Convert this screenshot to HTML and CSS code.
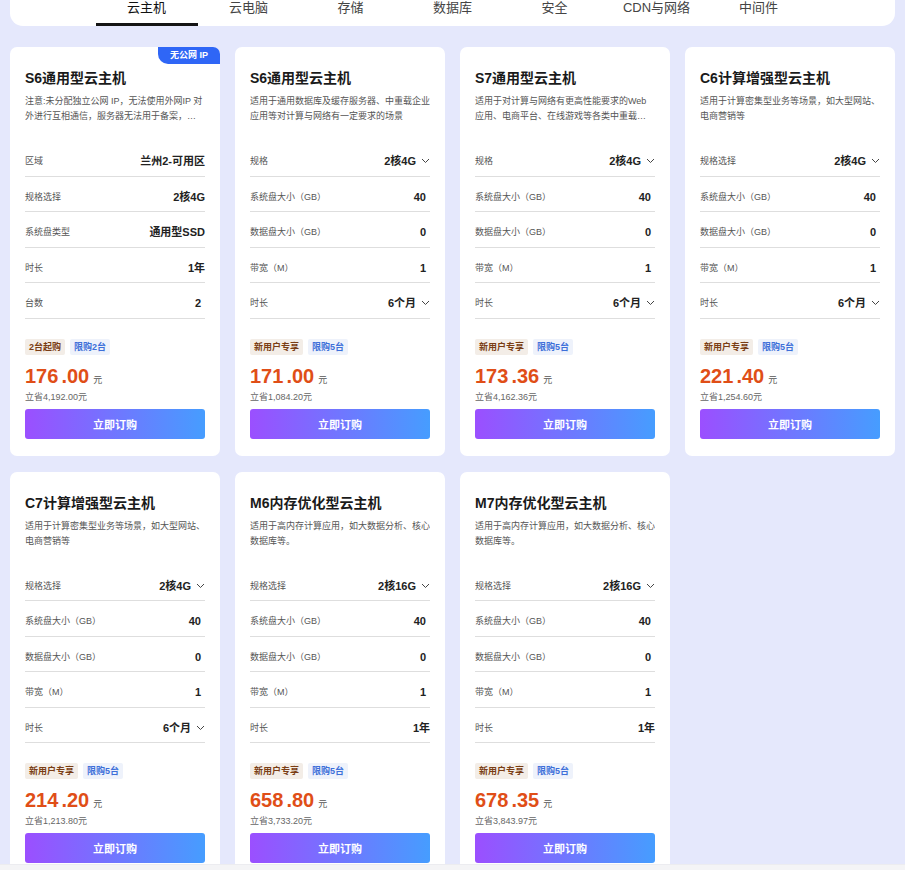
FILE: index.html
```html
<!DOCTYPE html>
<html lang="zh-CN">
<head>
  <meta charset="UTF-8" />
  <meta name="viewport" content="width=device-width, initial-scale=1.0" />
  <title>云主机</title>
  <link rel="stylesheet" href="styles.css">
</head>
<body>
  <div class="nav">
    <a class="tab active">云主机</a>
    <a class="tab">云电脑</a>
    <a class="tab">存储</a>
    <a class="tab">数据库</a>
    <a class="tab">安全</a>
    <a class="tab">CDN与网络</a>
    <a class="tab">中间件</a>
  </div>

  <div class="grid">
    <!-- S6 no public ip -->
    <div class="card">
      <span class="badge">无公网 IP</span>
      <h3>S6通用型云主机</h3>
      <p class="desc">注意:未分配独立公网 IP，无法使用外网IP 对外进行互相通信，服务器无法用于备案，请谨慎选择购买</p>
      <div class="rows">
        <div class="row"><span class="label">区域</span><span class="value">兰州2-可用区</span></div>
        <div class="row"><span class="label">规格选择</span><span class="value">2核4G</span></div>
        <div class="row"><span class="label">系统盘类型</span><span class="value">通用型SSD</span></div>
        <div class="row"><span class="label">时长</span><span class="value">1年</span></div>
        <div class="row"><span class="label">台数</span><span class="value num">2</span></div>
      </div>
      <div class="tags"><span class="tag brown">2台起购</span><span class="tag blue">限购2台</span></div>
      <div class="price"><span class="int">176</span><span class="dec">.00</span><span class="unit">元</span></div>
      <div class="save">立省4,192.00元</div>
      <button class="buy">立即订购</button>
    </div>

    <div class="card">
      <h3>S6通用型云主机</h3>
      <p class="desc">适用于通用数据库及缓存服务器、中重载企业应用等对计算与网络有一定要求的场景</p>
      <div class="rows">
        <div class="row"><span class="label">规格</span><span class="value select">2核4G<svg viewBox="0 0 9 6"><path d="M1 1l3.5 3.5L8 1"/></svg></span></div>
        <div class="row"><span class="label">系统盘大小（GB）</span><span class="value num">40</span></div>
        <div class="row"><span class="label">数据盘大小（GB）</span><span class="value num">0</span></div>
        <div class="row"><span class="label">带宽（M）</span><span class="value num">1</span></div>
        <div class="row"><span class="label">时长</span><span class="value select">6个月<svg viewBox="0 0 9 6"><path d="M1 1l3.5 3.5L8 1"/></svg></span></div>
      </div>
      <div class="tags"><span class="tag brown">新用户专享</span><span class="tag blue">限购5台</span></div>
      <div class="price"><span class="int">171</span><span class="dec">.00</span><span class="unit">元</span></div>
      <div class="save">立省1,084.20元</div>
      <button class="buy">立即订购</button>
    </div>

    <div class="card">
      <h3>S7通用型云主机</h3>
      <p class="desc">适用于对计算与网络有更高性能要求的Web应用、电商平台、在线游戏等各类中重载企业应用</p>
      <div class="rows">
        <div class="row"><span class="label">规格</span><span class="value select">2核4G<svg viewBox="0 0 9 6"><path d="M1 1l3.5 3.5L8 1"/></svg></span></div>
        <div class="row"><span class="label">系统盘大小（GB）</span><span class="value num">40</span></div>
        <div class="row"><span class="label">数据盘大小（GB）</span><span class="value num">0</span></div>
        <div class="row"><span class="label">带宽（M）</span><span class="value num">1</span></div>
        <div class="row"><span class="label">时长</span><span class="value select">6个月<svg viewBox="0 0 9 6"><path d="M1 1l3.5 3.5L8 1"/></svg></span></div>
      </div>
      <div class="tags"><span class="tag brown">新用户专享</span><span class="tag blue">限购5台</span></div>
      <div class="price"><span class="int">173</span><span class="dec">.36</span><span class="unit">元</span></div>
      <div class="save">立省4,162.36元</div>
      <button class="buy">立即订购</button>
    </div>

    <div class="card">
      <h3>C6计算增强型云主机</h3>
      <p class="desc">适用于计算密集型业务等场景，如大型网站、电商营销等</p>
      <div class="rows">
        <div class="row"><span class="label">规格选择</span><span class="value select">2核4G<svg viewBox="0 0 9 6"><path d="M1 1l3.5 3.5L8 1"/></svg></span></div>
        <div class="row"><span class="label">系统盘大小（GB）</span><span class="value num">40</span></div>
        <div class="row"><span class="label">数据盘大小（GB）</span><span class="value num">0</span></div>
        <div class="row"><span class="label">带宽（M）</span><span class="value num">1</span></div>
        <div class="row"><span class="label">时长</span><span class="value select">6个月<svg viewBox="0 0 9 6"><path d="M1 1l3.5 3.5L8 1"/></svg></span></div>
      </div>
      <div class="tags"><span class="tag brown">新用户专享</span><span class="tag blue">限购5台</span></div>
      <div class="price"><span class="int">221</span><span class="dec">.40</span><span class="unit">元</span></div>
      <div class="save">立省1,254.60元</div>
      <button class="buy">立即订购</button>
    </div>

    <div class="card">
      <h3>C7计算增强型云主机</h3>
      <p class="desc">适用于计算密集型业务等场景，如大型网站、电商营销等</p>
      <div class="rows">
        <div class="row"><span class="label">规格选择</span><span class="value select">2核4G<svg viewBox="0 0 9 6"><path d="M1 1l3.5 3.5L8 1"/></svg></span></div>
        <div class="row"><span class="label">系统盘大小（GB）</span><span class="value num">40</span></div>
        <div class="row"><span class="label">数据盘大小（GB）</span><span class="value num">0</span></div>
        <div class="row"><span class="label">带宽（M）</span><span class="value num">1</span></div>
        <div class="row"><span class="label">时长</span><span class="value select">6个月<svg viewBox="0 0 9 6"><path d="M1 1l3.5 3.5L8 1"/></svg></span></div>
      </div>
      <div class="tags"><span class="tag brown">新用户专享</span><span class="tag blue">限购5台</span></div>
      <div class="price"><span class="int">214</span><span class="dec">.20</span><span class="unit">元</span></div>
      <div class="save">立省1,213.80元</div>
      <button class="buy">立即订购</button>
    </div>

    <div class="card">
      <h3>M6内存优化型云主机</h3>
      <p class="desc">适用于高内存计算应用，如大数据分析、核心数据库等。</p>
      <div class="rows">
        <div class="row"><span class="label">规格选择</span><span class="value select">2核16G<svg viewBox="0 0 9 6"><path d="M1 1l3.5 3.5L8 1"/></svg></span></div>
        <div class="row"><span class="label">系统盘大小（GB）</span><span class="value num">40</span></div>
        <div class="row"><span class="label">数据盘大小（GB）</span><span class="value num">0</span></div>
        <div class="row"><span class="label">带宽（M）</span><span class="value num">1</span></div>
        <div class="row"><span class="label">时长</span><span class="value">1年</span></div>
      </div>
      <div class="tags"><span class="tag brown">新用户专享</span><span class="tag blue">限购5台</span></div>
      <div class="price"><span class="int">658</span><span class="dec">.80</span><span class="unit">元</span></div>
      <div class="save">立省3,733.20元</div>
      <button class="buy">立即订购</button>
    </div>

    <div class="card">
      <h3>M7内存优化型云主机</h3>
      <p class="desc">适用于高内存计算应用，如大数据分析、核心数据库等。</p>
      <div class="rows">
        <div class="row"><span class="label">规格选择</span><span class="value select">2核16G<svg viewBox="0 0 9 6"><path d="M1 1l3.5 3.5L8 1"/></svg></span></div>
        <div class="row"><span class="label">系统盘大小（GB）</span><span class="value num">40</span></div>
        <div class="row"><span class="label">数据盘大小（GB）</span><span class="value num">0</span></div>
        <div class="row"><span class="label">带宽（M）</span><span class="value num">1</span></div>
        <div class="row"><span class="label">时长</span><span class="value">1年</span></div>
      </div>
      <div class="tags"><span class="tag brown">新用户专享</span><span class="tag blue">限购5台</span></div>
      <div class="price"><span class="int">678</span><span class="dec">.35</span><span class="unit">元</span></div>
      <div class="save">立省3,843.97元</div>
      <button class="buy">立即订购</button>
    </div>
  </div>

  <div class="bottom-bar"></div>
</body>
</html>
```

FILE: styles.css
```css
* {
  margin: 0;
  padding: 0;
  box-sizing: border-box;
}

body {
  font-family: 'Liberation Sans', 'Noto Sans CJK SC', sans-serif;
  background: #e5e8fc;
  color: #222;
  min-height: 100vh;
}

/* Top tabs */
.nav {
  margin: 0 10px;
  height: 26px;
  background: #fff;
  border-radius: 0 0 13px 13px;
  display: flex;
  justify-content: center;
}

.tab {
  width: 102px;
  text-align: center;
  font-size: 13px;
  line-height: 16px;
  color: #444;
  position: relative;
}

.tab.active {
  color: #111;
}

.tab.active::after {
  content: '';
  position: absolute;
  left: 0;
  right: 0;
  bottom: 0;
  height: 3px;
  background: #141414;
}

/* Product cards */
.grid {
  display: grid;
  grid-template-columns: repeat(4, 210px);
  gap: 16px 15px;
  padding: 21px 10px 40px;
}

.card {
  position: relative;
  background: #fff;
  border-radius: 7px;
  padding: 23px 15px 17px;
}

.badge {
  position: absolute;
  top: 0;
  right: 0;
  width: 62px;
  height: 17px;
  line-height: 17px;
  text-align: center;
  font-size: 9px;
  font-weight: bold;
  color: #fff;
  background: #2f66f6;
  border-radius: 0 7px 0 10px;
}

.card h3 {
  font-size: 14px;
  line-height: 16px;
  font-weight: bold;
  color: #1a1a1a;
}

.desc {
  margin-top: 8px;
  height: 30px;
  font-size: 9px;
  line-height: 15px;
  color: #555;
  display: -webkit-box;
  -webkit-line-clamp: 2;
  -webkit-box-orient: vertical;
  overflow: hidden;
}

.rows {
  margin-top: 17px;
}

.row {
  display: flex;
  justify-content: space-between;
  align-items: center;
  padding: 14px 0 8.5px;
  line-height: 12px;
  border-bottom: 1px solid #dedede;
}

.label {
  font-size: 9px;
  color: #555;
}

.value {
  display: flex;
  align-items: center;
  font-size: 11px;
  font-weight: bold;
  color: #222;
}

.value.num {
  padding-right: 4px;
}

.value svg {
  width: 9px;
  height: 6px;
  margin-left: 5px;
  fill: none;
  stroke: #444;
  stroke-width: 1;
}

.tags {
  display: flex;
  gap: 5px;
  margin-top: 20px;
}

.tag {
  height: 16px;
  line-height: 16px;
  padding: 0 4px;
  font-size: 9px;
  font-weight: bold;
  border-radius: 2px;
}

.tag.brown {
  color: #7a3d14;
  background: #f3ede7;
}

.tag.blue {
  color: #3d6fd9;
  background: #eef2fb;
}

.price {
  margin-top: 10px;
  line-height: 22px;
  color: #e04e17;
  font-weight: bold;
  font-size: 20px;
}

.price .dec {
  margin-left: 3px;
}

.price .unit {
  margin-left: 4px;
  font-size: 9px;
  font-weight: normal;
  color: #555;
}

.save {
  margin-top: 0;
  font-size: 9px;
  line-height: 12px;
  color: #666;
}

.buy {
  display: block;
  width: 100%;
  height: 30px;
  margin-top: 6px;
  border: none;
  border-radius: 3px;
  background: linear-gradient(90deg, #9b4fff, #469dff);
  color: #fff;
  font-family: inherit;
  font-size: 11px;
  font-weight: bold;
}

.bottom-bar {
  position: fixed;
  left: 0;
  right: 0;
  bottom: 0;
  height: 6px;
  background: #f4f4f6;
  border-top: 1px solid #ececf0;
}
```
